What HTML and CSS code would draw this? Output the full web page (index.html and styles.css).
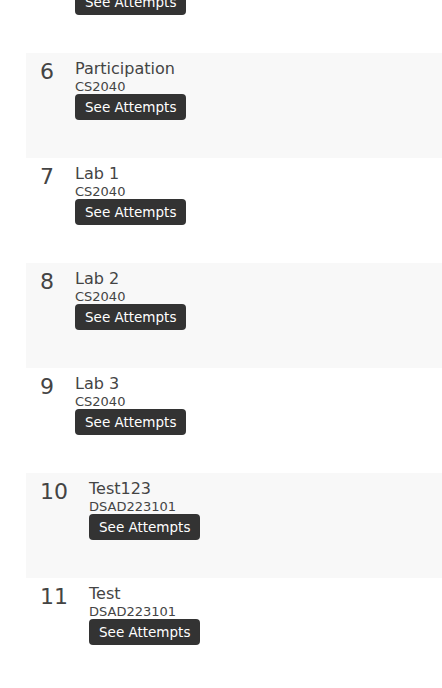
FILE: index.html
```html
<!DOCTYPE html>
<html lang="en">
<head>
<meta charset="utf-8">
<title>Assessments</title>
<link rel="stylesheet" href="styles.css">
</head>
<body>
<div class="list">
  <div class="row">
    <div class="num">5</div>
    <div class="info">
      <div class="title">Quiz</div>
      <div class="code">CS2040</div>
      <button class="btn">See Attempts</button>
    </div>
  </div>
  <div class="row alt">
    <div class="num">6</div>
    <div class="info">
      <div class="title">Participation</div>
      <div class="code">CS2040</div>
      <button class="btn">See Attempts</button>
    </div>
  </div>
  <div class="row">
    <div class="num">7</div>
    <div class="info">
      <div class="title">Lab 1</div>
      <div class="code">CS2040</div>
      <button class="btn">See Attempts</button>
    </div>
  </div>
  <div class="row alt">
    <div class="num">8</div>
    <div class="info">
      <div class="title">Lab 2</div>
      <div class="code">CS2040</div>
      <button class="btn">See Attempts</button>
    </div>
  </div>
  <div class="row">
    <div class="num">9</div>
    <div class="info">
      <div class="title">Lab 3</div>
      <div class="code">CS2040</div>
      <button class="btn">See Attempts</button>
    </div>
  </div>
  <div class="row alt">
    <div class="num">10</div>
    <div class="info">
      <div class="title">Test123</div>
      <div class="code">DSAD223101</div>
      <button class="btn">See Attempts</button>
    </div>
  </div>
  <div class="row">
    <div class="num">11</div>
    <div class="info">
      <div class="title">Test</div>
      <div class="code">DSAD223101</div>
      <button class="btn">See Attempts</button>
    </div>
  </div>
</div>
</body>
</html>
```

FILE: styles.css
```css
html, body {
  margin: 0;
  padding: 0;
  background: #ffffff;
}

body {
  font-family: "DejaVu Sans", sans-serif;
  color: #444444;
  overflow: hidden;
}

.list {
  margin-top: -52px;
  padding-left: 26px;
}

.row {
  display: flex;
  align-items: flex-start;
  gap: 21px;
  height: 105px;
  box-sizing: border-box;
  padding: 6px 0 0 14px;
}

.row.alt {
  background: #f8f8f8;
}

.num {
  font-size: 22px;
  line-height: normal;
  color: #444444;
}

.info {
  display: flex;
  flex-direction: column;
  align-items: flex-start;
}

.title {
  font-size: 16px;
  line-height: 20px;
  color: #444444;
}

.code {
  font-size: 13px;
  line-height: 15px;
  color: #444444;
}

.btn {
  font-family: "DejaVu Sans", sans-serif;
  font-size: 13.5px;
  line-height: 16px;
  padding: 5px 10px;
  margin: 0;
  border: none;
  border-radius: 4px;
  background: #333333;
  color: #ffffff;
}
```
